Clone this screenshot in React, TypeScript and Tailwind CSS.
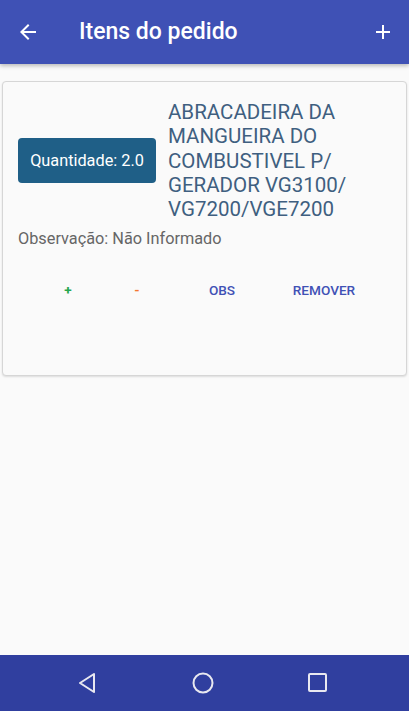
import React from 'react';

const font = { fontFamily: 'Roboto, "Noto Sans", sans-serif' };

const App = () => {
    return (
        <div className="w-[409px] h-[711px] flex flex-col bg-[#fafafa] overflow-hidden" style={font}>
            <header className="h-[64px] shrink-0 bg-[#3f51b5] flex items-center px-4 shadow-[0_2px_4px_rgba(0,0,0,0.25)] z-10">
                <svg width="24" height="24" viewBox="0 0 24 24" className="text-white">
                    <path d="M20 11H7.83l5.59-5.59L12 4l-8 8 8 8 1.41-1.41L7.83 13H20v-2z" fill="currentColor" />
                </svg>
                <h1 className="ml-[39px] text-white text-[23px] font-medium">Itens do pedido</h1>
                <div className="flex-1" />
                <svg width="24" height="24" viewBox="0 0 24 24" className="text-white mr-[-2px]">
                    <path d="M19 13h-6v6h-2v-6H5v-2h6V5h2v6h6v2z" fill="currentColor" />
                </svg>
            </header>

            <main className="flex-1 pt-[17px] px-[2px]">
                <div className="h-[295px] border border-[#d6d6d6] rounded-[4px] bg-[#fafafa] shadow-[0_1px_2px_rgba(0,0,0,0.12)]">
                    <div className="flex items-center pl-[15px] pt-[18px]">
                        <div className="w-[138px] h-[45px] rounded-[4px] bg-[#1f5f87] text-white text-[16.3px] flex items-center justify-center shrink-0">
                            Quantidade: 2.0
                        </div>
                        <p className="ml-[12px] text-[20.5px] leading-[24.3px] text-[#3f5f80] uppercase">
                            ABRACADEIRA DA MANGUEIRA DO COMBUSTIVEL P/ GERADOR VG3100/ VG7200/VGE7200
                        </p>
                    </div>
                    <p className="pl-[15px] mt-[6px] text-[16.3px] text-[#666666]">Observação: Não Informado</p>
                    <div className="flex pl-[31px] mt-[28px] text-[13.6px] font-medium">
                        <span className="w-[68px] text-center text-[#27a74e] font-bold">+</span>
                        <span className="w-[70px] text-center text-[#f47731] font-bold">-</span>
                        <span className="w-[100px] text-center text-[#3f51b5]">OBS</span>
                        <span className="w-[104px] text-center text-[#3f51b5]">REMOVER</span>
                    </div>
                </div>
            </main>

            <nav className="h-[56px] shrink-0 bg-[#303f9f] flex items-center justify-center gap-[91px] pr-[3px]">
                <svg width="24" height="24" viewBox="0 0 24 24">
                    <path d="M18 3 L4 12 L18 21 Z" fill="none" stroke="#e8e8f0" strokeWidth="2" strokeLinejoin="round" />
                </svg>
                <svg width="24" height="24" viewBox="0 0 24 24">
                    <circle cx="12" cy="12" r="9.5" fill="none" stroke="#e8e8f0" strokeWidth="2" />
                </svg>
                <svg width="24" height="24" viewBox="0 0 24 24">
                    <rect x="3" y="3" width="17" height="17" rx="1" fill="none" stroke="#e8e8f0" strokeWidth="2" />
                </svg>
            </nav>
        </div>
    );
};

export default App;
